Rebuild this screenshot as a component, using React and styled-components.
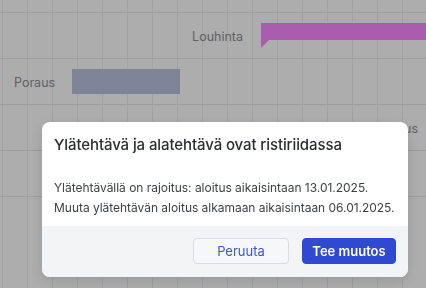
import React from "react";
import styled, { createGlobalStyle } from "styled-components";

const Global = createGlobalStyle`
  html, body { margin: 0; padding: 0; }
  body {
    width: 426px; height: 288px; overflow: hidden;
    background: #ffffff;
    font-family: Inter, "Noto Sans", sans-serif;
  }
`;

const Chart = styled.div`
  width: 426px;
  height: 288px;
  padding-top: 12px;
  box-sizing: border-box;
  background-color: #ffffff;
  background-image: linear-gradient(to right, #eeeff1 1px, transparent 1px);
  background-size: 25px 100%;
  background-position: 2px 0;
`;

const Row = styled.div`
  position: relative;
  height: 46px;
  border-top: 1px solid #e6e7ea;
  box-sizing: border-box;
`;

const Label = styled.span`
  position: absolute;
  top: 50%;
  transform: translateY(-50%);
  font-size: 12.5px;
  color: #8e9096;
  white-space: nowrap;
`;

const Bar = styled.div`
  position: absolute;
  background: ${(p) => p.$color};
  &::after {
    content: "";
    display: ${(p) => (p.$flag ? "block" : "none")};
    position: absolute;
    left: 0;
    top: 100%;
    width: 8px;
    height: 8px;
    background: ${(p) => p.$color};
    clip-path: polygon(0 0, 100% 0, 0 100%);
  }
`;

const Overlay = styled.div`
  position: fixed;
  inset: 0;
  background: rgba(0, 0, 0, 0.32);
  display: flex;
  align-items: flex-start;
  justify-content: flex-start;
  padding: 122px 0 0 42px;
`;

const Modal = styled.div`
  width: 366px;
  background: #ffffff;
  border-radius: 8px;
  overflow: hidden;
  box-shadow: 0 4px 14px rgba(0, 0, 0, 0.12);
`;

const Body = styled.div`
  padding: 12px 12px 8px 12px;
`;

const Title = styled.h2`
  margin: 0;
  font-size: 15px;
  font-weight: 500;
  color: #2b2d31;
  line-height: 22px;
  letter-spacing: -0.1px;
`;

const Text = styled.p`
  margin: 22px 0 0 0;
  font-size: 12px;
  line-height: 20px;
  color: #3c3f45;
  white-space: nowrap;
  letter-spacing: -0.03px;
`;

const Footer = styled.div`
  background: #f3f4f6;
  display: flex;
  justify-content: flex-end;
  gap: 13px;
  padding: 12px 12px 13px;
`;

const Button = styled.button`
  height: 26px;
  width: ${(p) => (p.$primary ? "94px" : "96px")};
  border-radius: 4px;
  font-family: inherit;
  font-size: 13px;
  font-weight: ${(p) => (p.$primary ? 600 : 400)};
  cursor: pointer;
  border: 1px solid ${(p) => (p.$primary ? "#2f49d1" : "#d9dbe0")};
  background: ${(p) => (p.$primary ? "#2f49d1" : "#f6f7f9")};
  color: ${(p) => (p.$primary ? "#ffffff" : "#3d55d6")};
  padding: 0;
`;

const rows = [
  { label: "Louhinta", pos: { right: 183 }, bar: { left: 261, top: 10, width: 180, height: 17, color: "#fd88ff", flag: true } },
  { label: "Poraus", pos: { left: 14 }, bar: { left: 72, top: 10, width: 108, height: 25, color: "#bbc2de" } },
  { label: "Injektioreikäpaikannus", pos: { right: 8 } },
];

export default function App() {
  return (
    <>
      <Global />
      <Chart>
        {rows.map((r) => (
          <Row key={r.label}>
            <Label style={r.pos}>{r.label}</Label>
            {r.bar && (
              <Bar
                $color={r.bar.color}
                $flag={r.bar.flag}
                style={{ left: r.bar.left, top: r.bar.top, width: r.bar.width, height: r.bar.height }}
              />
            )}
          </Row>
        ))}
        <Row />
        <Row />
      </Chart>
      <Overlay>
        <Modal role="dialog">
          <Body>
            <Title>Ylätehtävä ja alatehtävä ovat ristiriidassa</Title>
            <Text>
              Ylätehtävällä on rajoitus: aloitus aikaisintaan 13.01.2025.
              <br />
              Muuta ylätehtävän aloitus alkamaan aikaisintaan 06.01.2025.
            </Text>
          </Body>
          <Footer>
            <Button>Peruuta</Button>
            <Button $primary>Tee muutos</Button>
          </Footer>
        </Modal>
      </Overlay>
    </>
  );
}
